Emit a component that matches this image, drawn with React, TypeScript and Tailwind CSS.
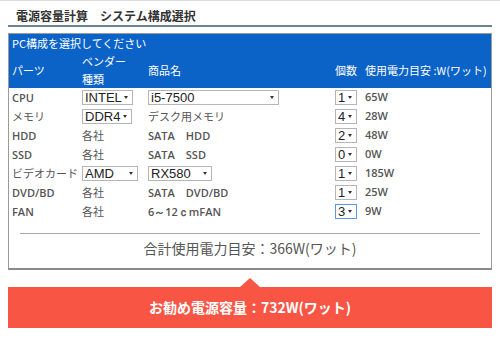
import type { ReactNode } from 'react';

type Row = {
  part: ReactNode;
  vendor: ReactNode;
  product: ReactNode;
  qty: string;
  power: string;
  focus?: boolean;
};

const lat = "font-['Open_Sans',sans-serif] font-semibold";

function Arrow() {
  return (
    <svg width="4" height="3" viewBox="0 0 4 3" className="shrink-0">
      <polygon points="0,0 4,0 2,3" fill="#333" />
    </svg>
  );
}

function Sel({ value, w, focus }: { value: string; w: string; focus?: boolean }) {
  return (
    <div
      className={`flex items-center h-[15px] bg-white border pr-[4px] ${w} ${
        focus ? 'border-[#5a97e0]' : 'border-[#b5b5b5]'
      }`}
    >
      <select
        defaultValue={value}
        className="appearance-none flex-1 min-w-0 h-full bg-transparent outline-none pl-[2px] text-[13px] leading-none text-[#222] font-['Liberation_Sans',sans-serif]"
      >
        <option>{value}</option>
      </select>
      <Arrow />
    </div>
  );
}

const rows: Row[] = [
  {
    part: <span className={lat}>CPU</span>,
    vendor: <Sel value="INTEL" w="w-[51px]" />,
    product: <Sel value="i5-7500" w="w-[131px]" />,
    qty: '1',
    power: '65W',
  },
  {
    part: 'メモリ',
    vendor: <Sel value="DDR4" w="w-[50px]" />,
    product: 'デスク用メモリ',
    qty: '4',
    power: '28W',
  },
  {
    part: <span className={lat}>HDD</span>,
    vendor: '各社',
    product: <span className={lat}>SATA　HDD</span>,
    qty: '2',
    power: '48W',
  },
  {
    part: <span className={lat}>SSD</span>,
    vendor: '各社',
    product: <span className={lat}>SATA　SSD</span>,
    qty: '0',
    power: '0W',
  },
  {
    part: 'ビデオカード',
    vendor: <Sel value="AMD" w="w-[56px]" />,
    product: <Sel value="RX580" w="w-[64px]" />,
    qty: '1',
    power: '185W',
  },
  {
    part: <span className={lat}>DVD/BD</span>,
    vendor: '各社',
    product: <span className={lat}>SATA　DVD/BD</span>,
    qty: '1',
    power: '25W',
  },
  {
    part: <span className={lat}>FAN</span>,
    vendor: '各社',
    product: <span className={lat}>6～12ｃmFAN</span>,
    qty: '3',
    power: '9W',
    focus: true,
  },
];

export default function App() {
  return (
    <div className="w-[500px] h-[342px] bg-white border-t border-[#dcdcdc] font-['Noto_Sans_CJK_JP',sans-serif] text-[#555] overflow-hidden">
      <div className="px-2">
        <h1 className="pl-2 pt-[6px] h-[26px] text-[12px] leading-[18px] font-bold text-[#333] border-b-2 border-[#6b8392]">
          電源容量計算　システム構成選択
        </h1>

        <div className="mt-[6px] border border-[#9a9a9a] border-b-2 border-b-[#8a8a8a]">
          <div className="bg-[#0b63c8] text-white text-[11px] pl-[3px]">
            <div className="h-[18px] leading-[18px]">PC構成を選択してください</div>
            <div className="grid grid-cols-[70px_66px_187px_30px_1fr] h-[36px] items-center">
              <div>パーツ</div>
              <div className="leading-[18px]">
                <div>ベンダー</div>
                <div>種類</div>
              </div>
              <div>商品名</div>
              <div>個数</div>
              <div>使用電力目安 :W(ワット)</div>
            </div>
          </div>

          <div className="pl-[3px] text-[11px]">
            {rows.map((r, i) => (
              <div key={i} className="grid grid-cols-[70px_66px_187px_30px_1fr] h-[19px] items-center">
                <div>{r.part}</div>
                <div>{r.vendor}</div>
                <div>{r.product}</div>
                <div>
                  <Sel value={r.qty} w="w-[22px]" focus={r.focus} />
                </div>
                <div className={lat}>{r.power}</div>
              </div>
            ))}
          </div>

          <div className="mx-[11px] mt-[12px] border-t border-[#aaa] pt-[4px] pb-[10px] h-[35px] text-center text-[14px] leading-[20px] text-[#555]">
            合計使用電力目安：366W(ワット)
          </div>
        </div>

        <div className="relative mt-[17px] h-[41px] bg-[#f95545] flex items-center justify-center text-white text-[14px] font-bold">
          <div className="absolute left-1/2 -translate-x-1/2 -top-[9px] w-0 h-0 border-l-[10px] border-r-[10px] border-b-[9px] border-l-transparent border-r-transparent border-b-[#f95545]" />
          お勧め電源容量：732W(ワット)
        </div>
      </div>
    </div>
  );
}
